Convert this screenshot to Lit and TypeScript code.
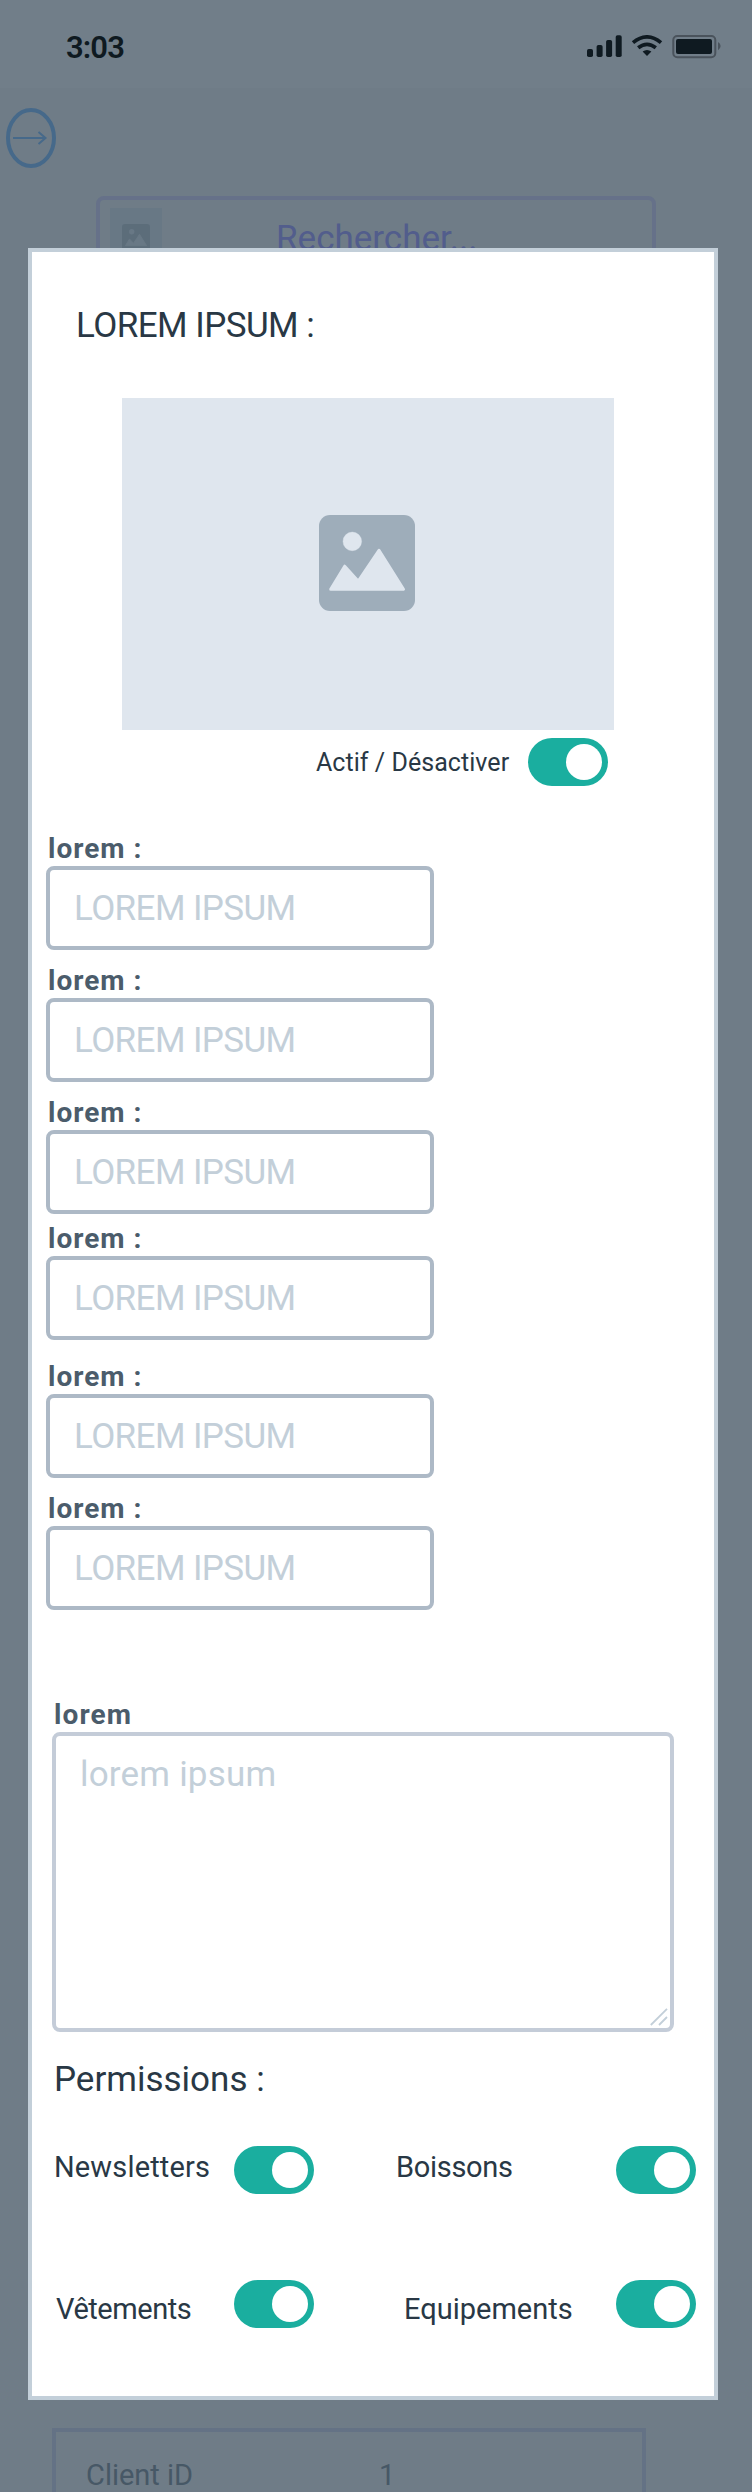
import { LitElement, html, css, svg } from "lit";
import { customElement, property } from "lit/decorators.js";

@customElement("toggle-switch")
class ToggleSwitch extends LitElement {
  static styles = css`
    :host { display: block; flex: none; width: 80px; height: 48px; }
    .track {
      box-sizing: border-box; display: flex; justify-content: flex-end;
      width: 100%; height: 48px; padding: 6px; border: 0; border-radius: 24px;
      background: #1aae9f;
    }
    .knob { width: 36px; height: 36px; border-radius: 18px; background: #fff; }
  `;
  render() {
    return html`<button class="track" role="switch" aria-checked="true"><span class="knob"></span></button>`;
  }
}

@customElement("image-icon")
class ImageIcon extends LitElement {
  static styles = css`
    :host { display: block; }
    svg { display: block; width: 100%; height: 100%; }
    .frame { fill: var(--frame, #9eadba); }
    .scene { fill: var(--scene, #dfe6ee); stroke: var(--scene, #dfe6ee); }
  `;
  render() {
    return html`<svg viewBox="0 0 96 96">
      <rect class="frame" width="96" height="96" rx="11"></rect>
      <circle class="scene" cx="33.3" cy="26.4" r="9.3" stroke-width="0.4"></circle>
      <path class="scene" stroke-width="3" stroke-linejoin="round" d="M11.7 74.3 L25.7 51.2 L39.3 66.2 L60 35.3 L84.5 74.3 Z"></path>
    </svg>`;
  }
}

@customElement("form-field")
class FormField extends LitElement {
  @property() label = "";
  @property() hint = "";
  static styles = css`
    :host { display: block; width: 388px; }
    .label {
      padding: 1px 0 0 2px; height: 32px; line-height: 32px; font-size: 28px; font-weight: 700;
      letter-spacing: 1px; color: #4b5c6b; white-space: nowrap;
    }
    .box {
      box-sizing: border-box; height: 84px; margin-top: 1px; padding: 1px 0 0 24px;
      border: 4px solid #adb9c6; border-radius: 8px; line-height: 76px;
      font-size: 35px; letter-spacing: -0.6px; color: #c3cfd9; white-space: nowrap;
    }
  `;
  render() {
    return html`<div class="label">${this.label}</div><div class="box">${this.hint}</div>`;
  }
}

const battery = svg`
  <rect x="87.3" y="1" width="42" height="21.2" rx="4" fill="none" stroke="#4a535c" stroke-width="2"></rect>
  <rect x="90" y="4" width="36" height="15" rx="2" fill="#0f1a21"></rect>
  <path d="M132 7 Q134.6 8.6 134.6 11 Q134.6 13.6 132 15.2 Z" fill="#4a535c"></path>`;

@customElement("app-root")
class AppRoot extends LitElement {
  static styles = css`
    :host {
      display: block; position: relative; width: 752px; height: 2492px; overflow: hidden;
      background: #6f7c87; color: #293845; font-family: Roboto, "Liberation Sans", sans-serif;
    }
    .backdrop { display: flex; flex-direction: column; height: 100%; }
    .status {
      box-sizing: border-box; flex: none; display: flex; justify-content: space-between; height: 88px;
      padding: 32px 31px 0 66px; background: #717e89; color: #0f1a21;
    }
    .time { height: 32px; line-height: 32px; font-size: 31px; font-weight: 600; letter-spacing: -0.9px; }
    .signals { margin-top: 3px; width: 135px; height: 24px; }
    .back { flex: none; display: block; margin: 20px 0 0 6px; width: 50px; height: 60px; }
    .search {
      box-sizing: border-box; flex: none; display: flex; width: 560px; height: 92px; margin: 28px 0 0 96px;
      padding: 8px 10px; border: 4px solid #667189; border-radius: 8px; color: #525d8c;
    }
    .thumb { box-sizing: border-box; width: 52px; height: 66px; padding: 16px 12px; background: #687885; }
    .thumb image-icon { height: 28px; --frame: #5c6d7a; --scene: #687885; }
    .query { margin-left: 114px; margin-top: 11px; height: 40px; line-height: 40px; font-size: 35px; }
    .client {
      box-sizing: border-box; display: grid; grid-template-columns: 293px 1fr; width: 594px; height: 120px;
      margin: auto 0 -56px 52px; padding: 27px 0 0 30px; border: 4px solid #647285;
      color: #475866; font-size: 29px; line-height: 32px;
    }
    .dialog {
      position: absolute; left: 28px; top: 248px; box-sizing: border-box; width: 690px; height: 2152px;
      border: 4px solid #c3cfd9; background: #fff; display: flex; flex-direction: column;
    }
    .title { margin: 54px 0 0 44px; height: 40px; line-height: 40px; font-size: 35px; letter-spacing: -0.55px; }
    .picture {
      flex: none; display: flex; width: 492px; height: 332px; margin: 52px 0 0 90px; background: #dfe6ee;
    }
    .picture image-icon { width: 96px; height: 96px; margin: 117px 0 0 197px; }
    .active { display: flex; justify-content: flex-end; gap: 16px; margin: 8px 106px 0 0; }
    .active-text {
      width: 196px; height: 48px; line-height: 49px; font-size: 25px; letter-spacing: 0.05px; white-space: nowrap;
    }
    .fields { margin: 46px 0 0 14px; display: flex; flex-direction: column; gap: 14px; }
    .tight { margin-top: -6px; }
    .loose { margin-top: 6px; }
    .note-label {
      margin: 89px 0 0 22px; height: 32px; line-height: 32px; font-size: 28px; font-weight: 700;
      letter-spacing: 1.1px; color: #4b5c6b;
    }
    .note {
      box-sizing: border-box; flex: none; display: flex; justify-content: space-between; width: 622px; height: 300px;
      margin: 1px 0 0 20px; padding: 19px 2px 2px 24px; border: 4px solid #c4ccd8; border-radius: 8px;
      color: #c3cfd9; font-size: 35px; line-height: 40px; letter-spacing: 0.2px;
    }
    .grip { align-self: flex-end; width: 18px; height: 18px; }
    .subtitle { margin: 28px 0 0 22px; height: 40px; line-height: 40px; font-size: 35px; letter-spacing: 0; }
    .grants {
      display: grid; grid-template-columns: 180px 162px 220px 80px; grid-template-rows: 48px 48px;
      row-gap: 86px; margin: 46px 0 0 22px; font-size: 29px; font-weight: 450; line-height: 42px;
    }
    .n1 { letter-spacing: 0.15px; }
    .n2 { letter-spacing: -0.3px; }
    .n3 { padding: 8px 0 0 2px; letter-spacing: -0.45px; }
    .n4 { padding: 8px 0 0 8px; letter-spacing: 0; }
  `;

  render() {
    const variants = ["", "", "", "tight", "loose", ""];
    return html`
      <div class="backdrop">
        <div class="status">
          <div class="time">3:03</div>
          <svg class="signals" viewBox="0 0 135 24">
            <g fill="#0f1a21">
              <rect x="1" y="14" width="6" height="8" rx="1.8"></rect>
              <rect x="10.6" y="10" width="6" height="12" rx="1.8"></rect>
              <rect x="20.1" y="5" width="6" height="17" rx="1.8"></rect>
              <rect x="29.7" y="0.3" width="6" height="21.7" rx="1.8"></rect>
              <path d="M61 21 L56.6 16.6 Q61 13.4 65.4 16.6 Z"></path>
            </g>
            <path d="M47 7.6 Q61 -3.8 75 7.6 M52.2 12.8 Q61 5.8 69.8 12.8" fill="none" stroke="#0f1a21" stroke-width="3.7"></path>
            ${battery}
          </svg>
        </div>
        <svg class="back" viewBox="0 0 50 60" fill="none" stroke="#46698a">
          <ellipse cx="25" cy="30" rx="23" ry="28" stroke-width="4"></ellipse>
          <path d="M7 30 H39 M32.5 24 L39.5 30 L32.5 36" stroke-width="2"></path>
        </svg>
        <div class="search"><div class="thumb"><image-icon></image-icon></div><div class="query">Rechercher...</div></div>
        <div class="client"><span>Client iD</span><span>1</span></div>
      </div>
      <div class="dialog" role="dialog">
        <div class="title">LOREM IPSUM :</div>
        <div class="picture"><image-icon></image-icon></div>
        <div class="active"><div class="active-text">Actif / Désactiver</div><toggle-switch></toggle-switch></div>
        <div class="fields">
          ${variants.map((v) => html`<form-field class=${v} label="lorem :" hint="LOREM IPSUM"></form-field>`)}
        </div>
        <div class="note-label">lorem</div>
        <div class="note">
          <span>lorem ipsum</span>
          <svg class="grip" viewBox="0 0 18 18" fill="none" stroke="#c3cfd9" stroke-width="1.8"><path d="M0.8 17 L17 0.8 M9 17 L17 9"></path></svg>
        </div>
        <div class="subtitle">Permissions :</div>
        <div class="grants">
          <span class="n1">Newsletters</span><toggle-switch></toggle-switch>
          <span class="n2">Boissons</span><toggle-switch></toggle-switch>
          <span class="n3">Vêtements</span><toggle-switch></toggle-switch>
          <span class="n4">Equipements</span><toggle-switch></toggle-switch>
        </div>
      </div>
    `;
  }
}
